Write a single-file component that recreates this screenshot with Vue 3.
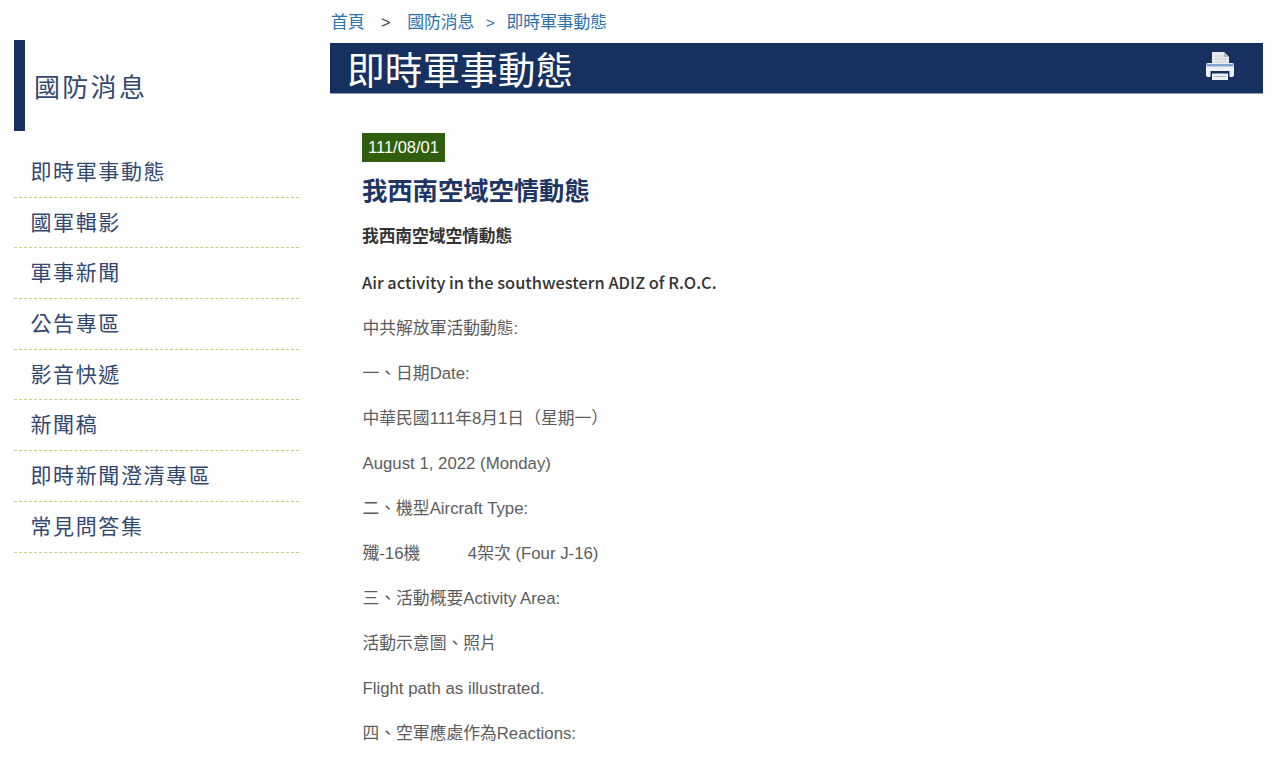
<script setup>
const nav = ['即時軍事動態', '國軍輯影', '軍事新聞', '公告專區', '影音快遞', '新聞稿', '即時新聞澄清專區', '常見問答集']
const lines = [
  '中共解放軍活動動態:',
  '一、日期Date:',
  '中華民國111年8月1日（星期一）',
  'August 1, 2022 (Monday)',
  '二、機型Aircraft Type:',
  '殲-16機　　   4架次 (Four J-16)',
  '三、活動概要Activity Area:',
  '活動示意圖、照片',
  'Flight path as illustrated.',
  '四、空軍應處作為Reactions:',
]
</script>

<template>
  <div class="page">
    <aside class="side">
      <h2 class="side-title">國防消息</h2>
      <ul class="nav">
        <li v-for="n in nav" :key="n">{{ n }}</li>
      </ul>
    </aside>
    <main class="main">
      <nav class="crumbs">
        <a>首頁</a><span class="sep first">&gt;</span><a>國防消息</a><span class="sep">&gt;</span><a>即時軍事動態</a>
      </nav>
      <header class="bar">
        <h1>即時軍事動態</h1>
        <svg class="print" width="30" height="30" viewBox="0 0 30 30">
          <path d="M7 1h12l5 5v8H7z" fill="#e9ecef" />
          <path d="M19 1v5h5z" fill="#aeb8c6" />
          <path d="M9.500 5h8M9.500 8h12M9.500 11h12" stroke="#c6ccd4" stroke-width="1.200" />
          <path d="M3 12h24a2 2 0 0 1 2 2v10a2 2 0 0 1-2 2h-2.500v-4h-19v4H3a2 2 0 0 1-2-2V14a2 2 0 0 1 2-2z" fill="#eef1f4" />
          <rect x="1.500" y="13" width="27" height="2.500" fill="#86a3cc" />
          <rect x="5.500" y="20" width="19" height="2" fill="#16305f" />
          <path d="M7 22.500h16V29H7z" fill="#eef1f4" />
          <path d="M9 25.500h12" stroke="#aab2bf" stroke-width="1" />
        </svg>
      </header>
      <article class="content">
        <span class="date">111/08/01</span>
        <h3 class="title">我西南空域空情動態</h3>
        <p class="strong">我西南空域空情動態</p>
        <p class="en">Air activity in the southwestern ADIZ of R.O.C.</p>
        <p v-for="l in lines" :key="l" class="line">{{ l }}</p>
      </article>
    </main>
  </div>
</template>

<style>
html, body { margin: 0; height: 762px; overflow: hidden; background: #fff; }
</style>

<style scoped>
.page {
  display: flex;
  height: 762px;
  overflow: hidden;
  font-family: "Liberation Sans", "Noto Sans CJK TC", sans-serif;
}
.side { width: 285px; margin-left: 14px; padding-top: 40px; flex: none; }
.side-title {
  margin: 0;
  height: 91px;
  display: flex;
  align-items: center;
  border-left: 11px solid #16305f;
  padding-left: 9px;
  font-size: 26px;
  font-weight: 400;
  letter-spacing: 2.300px;
  color: #33486f;
}
.nav { list-style: none; margin: 16px 0 0; padding: 0; }
.nav li {
  height: 50.700px;
  line-height: 50px;
  padding-left: 16.500px;
  font-size: 21px;
  letter-spacing: 1.600px;
  color: #33486f;
  border-bottom: 1px dashed #c8cc80;
  box-sizing: border-box;
}
.main { width: 933px; margin-left: 31px; flex: none; }
.crumbs {
  height: 43px;
  line-height: 44px;
  font-size: 16.800px;
  color: #2b72ad;
  padding-left: 1px;
  white-space: nowrap;
}
.sep { color: #2b72ad; margin: 0 11.500px; font-size: 15.500px; }
.sep.first { color: #444; font-size: 16.500px; margin: 0 16.500px; }
.bar {
  height: 51px;
  background: #16305f;
  display: flex;
  align-items: center;
  justify-content: space-between;
  padding: 0 28px 0 18px;
  border-bottom: 1px solid #8aa0c0;
  box-sizing: border-box;
}
.bar h1 {
  margin: 0;
  font-size: 37.700px;
  font-weight: 400;
  line-height: 50px;
  color: #fff;
  position: relative;
  top: 3px;
  left: -1px;
}
.print { display: block; margin-top: -4px; }
.content { padding: 39px 0 0 32px; color: #5c5c5c; }
.date {
  display: inline-block;
  height: 29px;
  line-height: 29px;
  padding: 0 6px;
  background: #2f5f0e;
  color: #fff;
  font-size: 16.500px;
  vertical-align: top;
}
.title {
  margin: 13px 0 0;
  height: 32px;
  line-height: 32px;
  font-size: 25.300px;
  font-weight: 700;
  color: #1d3664;
}
.strong {
  margin: 18px 0 0;
  line-height: 24px;
  font-size: 16.700px;
  font-weight: 700;
  color: #333;
}
.en {
  margin: 21px 0 0;
  line-height: 24px;
  font-family: "Noto Sans CJK TC", sans-serif;
  font-size: 16.400px;
  font-weight: 500;
  color: #333;
}
.line {
  margin: 21px 0 0;
  line-height: 24px;
  font-size: 16.800px;
  white-space: pre;
  position: relative;
  top: 2px;
  left: 0.500px;
}
</style>
